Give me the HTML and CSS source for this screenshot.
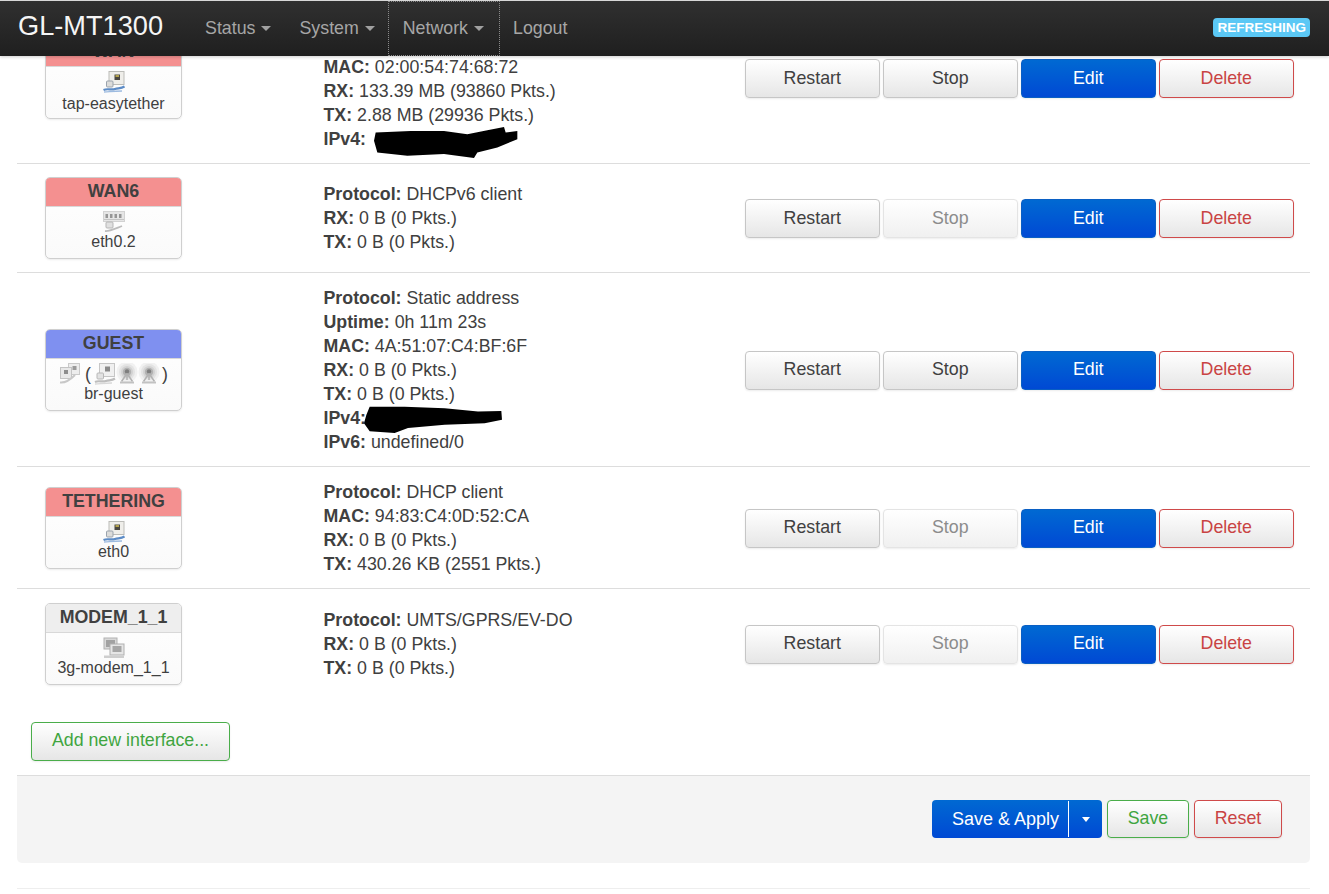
FILE: index.html
```html
<!DOCTYPE html>
<html lang="en">
<head>
<meta charset="utf-8">
<title>GL-MT1300 - Interfaces</title>
<link rel="stylesheet" href="styles.css">
</head>
<body>
<svg class="defs" width="0" height="0" aria-hidden="true">
  <defs>
    <g id="i-eth">
      <rect x="6" y="0.5" width="15" height="13" fill="#efeeea" stroke="#bcbcb8"/>
      <rect x="11.5" y="3.5" width="5.5" height="5.5" fill="#4a473f"/>
      <rect x="12.5" y="4" width="3.5" height="2" fill="#b3a24c"/>
      <rect x="3.5" y="10" width="6.5" height="6" rx="1" fill="#dcdcda" stroke="#9aa3ad"/>
      <path d="M0.5 19C5 17 8 19.5 12 18C15 17 18 17.5 21.5 15.5" fill="none" stroke="#5d8cc6" stroke-width="2.2"/>
      <path d="M1 21C6 21 9 20 19 20" fill="none" stroke="#9dbbe0" stroke-width="1.3"/>
    </g>
    <g id="i-eth-gray">
      <rect x="5.5" y="0.5" width="15" height="13" fill="#f0f0f0" stroke="#c6c6c6"/>
      <rect x="11" y="3.5" width="5" height="5" fill="#8a8a8a"/>
      <rect x="3" y="10" width="6.5" height="6" rx="1" fill="#e2e2e2" stroke="#b8b8b8"/>
      <path d="M1 19C5 17 8 19.5 12 18C15 17 18 17.5 21 15.5" fill="none" stroke="#bdbdbd" stroke-width="2.2"/>
      <path d="M1 21C6 21 9 20 18 20" fill="none" stroke="#d8d8d8" stroke-width="1.3"/>
    </g>
    <g id="i-switch">
      <rect x="0.5" y="0.5" width="21" height="10" fill="#e6e6e6" stroke="#d2d2d2"/>
      <path d="M2.5 3h2.5v4H2.5zM7 3h2.5v4H7zM11.5 3H14v4h-2.5zM16 3h2.5v4H16z" fill="#969696"/>
      <path d="M1 8.5h20" stroke="#c4c4c4"/>
      <rect x="3" y="11" width="7" height="6" rx="1" fill="#e0e0e0" stroke="#b6b6b6"/>
      <path d="M2 20C6 20.5 10 18.5 19 15" fill="none" stroke="#bcbcbc" stroke-width="1.8"/>
    </g>
    <g id="i-bridge">
      <rect x="9.5" y="0.5" width="11" height="11" fill="#ededed" stroke="#cacaca"/>
      <rect x="13.5" y="3" width="4" height="4" fill="#9a9a9a"/>
      <rect x="1.5" y="4.5" width="11" height="11" fill="#e8e8e8" stroke="#c4c4c4"/>
      <rect x="5" y="7" width="4" height="4" fill="#8d8d8d"/>
      <path d="M1 19.5C5 20 10 18 16 12" fill="none" stroke="#c8c8c8" stroke-width="2"/>
    </g>
    <g id="i-wifi">
      <circle cx="11" cy="9" r="10.5" fill="#f1f1f1"/>
      <circle cx="11" cy="9" r="8" fill="#e3e3e3"/>
      <circle cx="11" cy="9" r="6" fill="#d2d2d2"/>
      <circle cx="11" cy="9" r="4.2" fill="#b2b2b2"/>
      <circle cx="11" cy="8.5" r="2.2" fill="#7e7e7e"/>
      <path d="M11 10.5L5.5 18.5M11 10.5L16.5 18.5M11 10.5V17" stroke="#b2b2b2" stroke-width="1.5" fill="none"/>
      <path d="M4 19.5h14" stroke="#c2c2c2" stroke-width="2"/>
    </g>
    <g id="i-modem">
      <rect x="1" y="1" width="13" height="11" fill="#d8d8d8" stroke="#b2b2b2"/>
      <rect x="3" y="3" width="9" height="7" fill="#a2a2a2"/>
      <rect x="7" y="7" width="14" height="11" fill="#e6e6e6" stroke="#b0b0b0"/>
      <rect x="9.5" y="9" width="9" height="6" fill="#a6a6a6"/>
      <rect x="1" y="18.5" width="20" height="2.5" fill="#cecece"/>
    </g>
  </defs>
</svg>

<header class="navbar">
  <a class="brand">GL-MT1300</a>
  <nav class="nav">
    <a class="nav-item">Status<span class="caret"></span></a>
    <a class="nav-item">System<span class="caret"></span></a>
    <a class="nav-item focus">Network<span class="caret"></span></a>
    <a class="nav-item">Logout</a>
  </nav>
  <span class="refreshing">REFRESHING</span>
</header>

<main class="viewport">
  <div class="page">
    <section class="table">
      <div class="row row-first">
        <div class="cell-badge">
          <div class="ifc">
            <div class="ifc-head red">WAN</div>
            <div class="ifc-body">
              <svg class="ico" viewBox="0 0 22 22"><use href="#i-eth"/></svg>
              <div class="ifc-name">tap-easytether</div>
            </div>
          </div>
        </div>
        <div class="cell-info">
          <div class="covered"><b>Protocol:</b> DHCP client</div>
          <div class="covered"><b>Uptime:</b> 0h 11m 23s</div>
          <div><b>MAC:</b> 02:00:54:74:68:72</div>
          <div><b>RX:</b> 133.39 MB (93860 Pkts.)</div>
          <div><b>TX:</b> 2.88 MB (29936 Pkts.)</div>
          <div class="redact-line"><b>IPv4:</b>
            <svg class="scribble s1" viewBox="190 45 432 100" preserveAspectRatio="none"><path d="M195 65L300 60L400 60L470 70L530 58L580 48L585 65L620 60L620 85L560 110L500 125L490 142L400 130L290 135L200 125L190 90Z"/></svg>
          </div>
        </div>
        <div class="cell-actions">
          <button class="btn">Restart</button>
          <button class="btn">Stop</button>
          <button class="btn primary">Edit</button>
          <button class="btn danger">Delete</button>
        </div>
      </div>

      <div class="row">
        <div class="cell-badge">
          <div class="ifc">
            <div class="ifc-head red">WAN6</div>
            <div class="ifc-body">
              <svg class="ico" viewBox="0 0 22 22"><use href="#i-switch"/></svg>
              <div class="ifc-name">eth0.2</div>
            </div>
          </div>
        </div>
        <div class="cell-info short">
          <div><b>Protocol:</b> DHCPv6 client</div>
          <div><b>RX:</b> 0 B (0 Pkts.)</div>
          <div><b>TX:</b> 0 B (0 Pkts.)</div>
        </div>
        <div class="cell-actions">
          <button class="btn">Restart</button>
          <button class="btn off">Stop</button>
          <button class="btn primary">Edit</button>
          <button class="btn danger">Delete</button>
        </div>
      </div>

      <div class="row">
        <div class="cell-badge">
          <div class="ifc">
            <div class="ifc-head blue">GUEST</div>
            <div class="ifc-body">
              <div class="ico-line">
                <svg class="ico" viewBox="0 0 22 22"><use href="#i-bridge"/></svg>
                <span class="paren">(</span>
                <svg class="ico" viewBox="0 0 22 22"><use href="#i-eth-gray"/></svg>
                <svg class="ico" viewBox="0 0 22 22"><use href="#i-wifi"/></svg>
                <svg class="ico" viewBox="0 0 22 22"><use href="#i-wifi"/></svg>
                <span class="paren">)</span>
              </div>
              <div class="ifc-name">br-guest</div>
            </div>
          </div>
        </div>
        <div class="cell-info">
          <div><b>Protocol:</b> Static address</div>
          <div><b>Uptime:</b> 0h 11m 23s</div>
          <div><b>MAC:</b> 4A:51:07:C4:BF:6F</div>
          <div><b>RX:</b> 0 B (0 Pkts.)</div>
          <div><b>TX:</b> 0 B (0 Pkts.)</div>
          <div class="redact-line"><b>IPv4:</b>
            <svg class="scribble s2" viewBox="155 30 420 88" preserveAspectRatio="none"><path d="M175 35L280 35L400 40L500 50L570 48L572 75L520 85L400 90L290 100L250 115L175 110L158 85L165 60Z"/></svg>
          </div>
          <div><b>IPv6:</b> undefined/0</div>
        </div>
        <div class="cell-actions">
          <button class="btn">Restart</button>
          <button class="btn">Stop</button>
          <button class="btn primary">Edit</button>
          <button class="btn danger">Delete</button>
        </div>
      </div>

      <div class="row">
        <div class="cell-badge">
          <div class="ifc">
            <div class="ifc-head red">TETHERING</div>
            <div class="ifc-body">
              <svg class="ico" viewBox="0 0 22 22"><use href="#i-eth"/></svg>
              <div class="ifc-name">eth0</div>
            </div>
          </div>
        </div>
        <div class="cell-info">
          <div><b>Protocol:</b> DHCP client</div>
          <div><b>MAC:</b> 94:83:C4:0D:52:CA</div>
          <div><b>RX:</b> 0 B (0 Pkts.)</div>
          <div><b>TX:</b> 430.26 KB (2551 Pkts.)</div>
        </div>
        <div class="cell-actions">
          <button class="btn">Restart</button>
          <button class="btn off">Stop</button>
          <button class="btn primary">Edit</button>
          <button class="btn danger">Delete</button>
        </div>
      </div>

      <div class="row row-last">
        <div class="cell-badge">
          <div class="ifc">
            <div class="ifc-head grey">MODEM_1_1</div>
            <div class="ifc-body">
              <svg class="ico" viewBox="0 0 22 22"><use href="#i-modem"/></svg>
              <div class="ifc-name">3g-modem_1_1</div>
            </div>
          </div>
        </div>
        <div class="cell-info short">
          <div><b>Protocol:</b> UMTS/GPRS/EV-DO</div>
          <div><b>RX:</b> 0 B (0 Pkts.)</div>
          <div><b>TX:</b> 0 B (0 Pkts.)</div>
        </div>
        <div class="cell-actions">
          <button class="btn">Restart</button>
          <button class="btn off">Stop</button>
          <button class="btn primary">Edit</button>
          <button class="btn danger">Delete</button>
        </div>
      </div>
    </section>

    <div class="add-wrap">
      <button class="btn positive add">Add new interface...</button>
    </div>

    <div class="actions">
      <div class="split">
        <span class="split-main">Save &amp; Apply</span>
        <span class="split-toggle"><span class="split-caret"></span></span>
      </div>
      <button class="btn positive save">Save</button>
      <button class="btn danger reset">Reset</button>
    </div>

    <div class="foot-rule"></div>
  </div>
</main>
</body>
</html>
```
FILE: styles.css
```css
* { box-sizing: border-box; }
html, body { margin: 0; padding: 0; height: 100%; overflow: hidden; background: #fff; }
body {
  display: flex;
  flex-direction: column;
  font-family: "Liberation Sans", Arial, sans-serif;
  font-size: 17.8px;
  line-height: 24px;
  color: #404040;
}
.defs { position: absolute; }

.navbar {
  position: relative;
  z-index: 10;
  flex: none;
  height: 56px;
  display: flex;
  align-items: center;
  padding: 0 19px 0 18px;
  background: linear-gradient(#303030, #1f1f1f);
  border-top: 1px solid #d8d8d8;
  box-shadow: 0 1px 3px rgba(0,0,0,.2);
}
.brand { font-size: 27.2px; color: #f5f5f5; line-height: 50px; margin: 0 28px 5px 0; }
.nav { display: flex; align-self: stretch; }
.nav-item {
  display: flex;
  align-items: center;
  padding: 0 14px 2px;
  color: #a6a6a6;
}
.nav-item.focus {
  outline: 1px dotted #8a8a8a;
  outline-offset: -1px;
  margin-left: -1px;
  padding-left: 15px;
  padding-right: 16px;
}
.nav-item.focus + .nav-item { padding-left: 13px; }
.caret {
  display: inline-block;
  width: 0; height: 0;
  margin: 2px 0 0 6px;
  border-left: 5px solid transparent;
  border-right: 5px solid transparent;
  border-top: 5px solid #a0a0a0;
}
.refreshing {
  margin: 0 0 3px auto;
  background: #5bc8f5;
  color: #fff;
  font-weight: bold;
  font-size: 13.5px;
  line-height: 19px;
  padding: 0 4px;
  border-radius: 4px;
}

.viewport { flex: 1; min-height: 0; overflow: hidden; }
.page { margin: -63px 19px 0 17px; }

.row {
  display: grid;
  grid-template-columns: 306.5px 1fr auto;
  align-items: center;
  padding: 12px 16px 11px 0;
  border-bottom: 1px solid #ddd;
  min-height: 109px;
}
.row-first { padding-top: 14px; padding-bottom: 12px; }
.row-last { border-bottom: 0; }
.covered { visibility: hidden; }
.cell-badge { padding-left: 28px; }
.cell-info { padding-top: 1px; margin-bottom: 1px; }
.cell-info.short { margin-bottom: 2px; }
.row-first .cell-info { padding-top: 0; margin-bottom: 0; }
.ifc {
  width: 137px;
  height: 82px;
  margin: 1px 0 2px;
  border: 1px solid #cfcfcf;
  border-radius: 5px;
  overflow: hidden;
  background: linear-gradient(#fff, #fafafa);
  box-shadow: 0 1px 2px rgba(0,0,0,.08);
  text-align: center;
  color: #404040;
}
.row-first .ifc { margin: 0 0 2px; }
.row-first .ifc-name { margin-top: 1px; }
.row-first .cell-actions { margin-bottom: 1px; }
.ifc-head {
  height: 29px;
  font-weight: bold;
  line-height: 27px;
  border-bottom: 1px solid #d8d8d8;
}
.ifc-head.red { background: #f49090; }
.ifc-head.blue { background: #7f90f0; }
.ifc-head.grey { background: #eee; }
.ifc-body { display: flex; flex-direction: column; align-items: center; padding-top: 4px; }
.ifc-name { font-size: 16px; line-height: 20px; margin-top: -1px; }
.ico { display: block; width: 22px; height: 22px; flex: none; }
.ico-line { display: flex; align-items: center; height: 22px; }
.paren { margin: 0 3px 0 4px; }
.ico + .ico + .ico + .paren { margin: 0 0 0 2px; }

.redact-line { position: relative; }
.scribble { position: absolute; fill: #000; }
.scribble.s1 { left: 50px; top: -1px; width: 144px; height: 33px; }
.scribble.s2 { left: 39px; top: -1px; width: 140px; height: 29px; }

.cell-actions { display: flex; gap: 2.5px; }
.btn {
  width: 135.5px;
  height: 39px;
  padding: 0 0 2px;
  font: inherit;
  color: #404040;
  background: linear-gradient(#fff, #e6e6e6);
  border: 1px solid #c6c6c6;
  border-radius: 4px;
  box-shadow: 0 1px 2px rgba(0,0,0,.08);
}
.btn.off { color: #8c8c8c; border-color: #e4e4e4; background: linear-gradient(#fff, #f0f0f0); }
.btn.primary { color: #fff; background: linear-gradient(#0069d2, #0049d4); border-color: #0a5fc4; }
.btn.danger { color: #c94343; border-color: #cf4a4a; }
.btn.positive { color: #3fa53f; border-color: #4aad4a; }

.add-wrap { padding: 24px 0 14px 14px; }
.btn.add { width: 199px; padding-bottom: 3px; }

.actions {
  display: flex;
  justify-content: flex-end;
  align-items: center;
  gap: 5px;
  height: 88px;
  padding: 0 28px 1px 0;
  background: #f4f4f4;
  border-top: 1px solid #ddd;
  border-radius: 0 0 5px 5px;
}
.split {
  display: flex;
  width: 170px;
  height: 38px;
  color: #fff;
  font-size: 18px;
  background: linear-gradient(#0069d2, #0049d4);
  border-radius: 4px;
}
.split-main { flex: 1; padding-left: 20px; line-height: 38px; white-space: nowrap; }
.split-toggle {
  width: 34px;
  margin: 1px 0;
  border-left: 1px solid #fff;
  display: flex;
  align-items: center;
  justify-content: center;
}
.split-caret {
  width: 0; height: 0;
  border-left: 4px solid transparent;
  border-right: 4px solid transparent;
  border-top: 5px solid #fff;
}
.btn.save { width: 82px; height: 38px; }
.btn.reset { width: 88px; height: 38px; }
.foot-rule { margin-top: 25px; border-top: 1px solid #eee; }
```
